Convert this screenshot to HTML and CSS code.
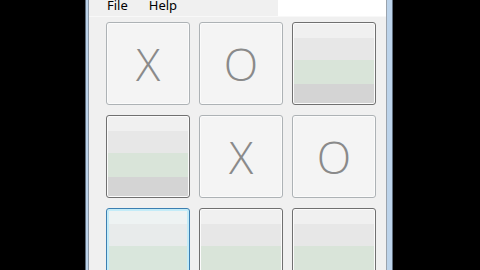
FILE: index.html
```html
<!DOCTYPE html>
<html lang="en">
<head>
    <meta charset="UTF-8">
    <meta name="viewport" content="width=device-width, initial-scale=1.0">
    <title>Tic Tac Toe</title>
    <link rel="stylesheet" href="styles.css">
</head>
<body>
    <div class="frame">
        <div class="window">
            <div class="menubar">
                <span class="menu first">File</span>
                <span class="menu">Help</span>
                <div class="menu-blank"></div>
            </div>
            <div class="board">
                <button class="cell done">X</button>
                <button class="cell done">O</button>
                <button class="cell"></button>
                <button class="cell"></button>
                <button class="cell done">X</button>
                <button class="cell done">O</button>
                <button class="cell focus"></button>
                <button class="cell"></button>
                <button class="cell"></button>
            </div>
        </div>
    </div>
</body>
</html>
```

FILE: styles.css
```css
body {
    margin: 0;
    background: #000;
    font-family: "Noto Sans", "DejaVu Sans", sans-serif;
    height: 270px;
    overflow: hidden;
}
.frame {
    margin-left: 85px;
    width: 299px;
    height: 270px;
    border-left: 1px solid #5f6d7c;
    border-right: 1px solid #5f6d7c;
    padding: 0 5px 0 2px;
    background: #bcd3ea;
    overflow: hidden;
}
.window {
    height: 270px;
    background: #f0f0f0;
    border-left: 1px solid #8b99a8;
    border-right: 1px solid #9aa3ad;
    overflow: hidden;
}
.menubar {
    display: flex;
    height: 16px;
    border-bottom: 1px solid #f8f8f8;
}
.menu {
    font-size: 13px;
    line-height: 10px;
    color: #000;
    margin-left: 21px;
}
.menu.first {
    margin-left: 18px;
}
.menu-blank {
    margin-left: auto;
    width: 108px;
    background: #fff;
}
.board {
    display: grid;
    grid-template-columns: repeat(3, 84px);
    grid-auto-rows: 83px;
    column-gap: 9px;
    row-gap: 10px;
    padding: 5px 0 0 17px;
}
.cell {
    box-sizing: border-box;
    padding: 0;
    border: 1px solid #707070;
    border-radius: 3px;
    box-shadow: inset 0 0 0 1px #fbfbfb;
    background: linear-gradient(#f0f0f0 0, #f0f0f0 19%, #e7e7e7 19%, #e7e7e7 46%, #d9e4d9 46%, #d9e4d9 75%, #d4d4d4 75%, #d4d4d4 100%);
    font-family: "Open Sans", "Noto Sans", sans-serif;
    font-weight: 360;
    font-size: 45px;
    color: #8a8a8a;
    cursor: pointer;
}
.cell.done {
    border-color: #adb2b5;
    background: #f4f4f4;
}
.cell.focus {
    border-color: #3c7fb1;
    box-shadow: inset 0 0 0 2px #c4ecf8;
    background: linear-gradient(#eef3f3 0, #eef3f3 19%, #e8ebeb 19%, #e8ebeb 46%, #d9e6dc 46%, #d9e6dc 75%, #d2dcd6 75%, #d2dcd6 100%);
}
```
